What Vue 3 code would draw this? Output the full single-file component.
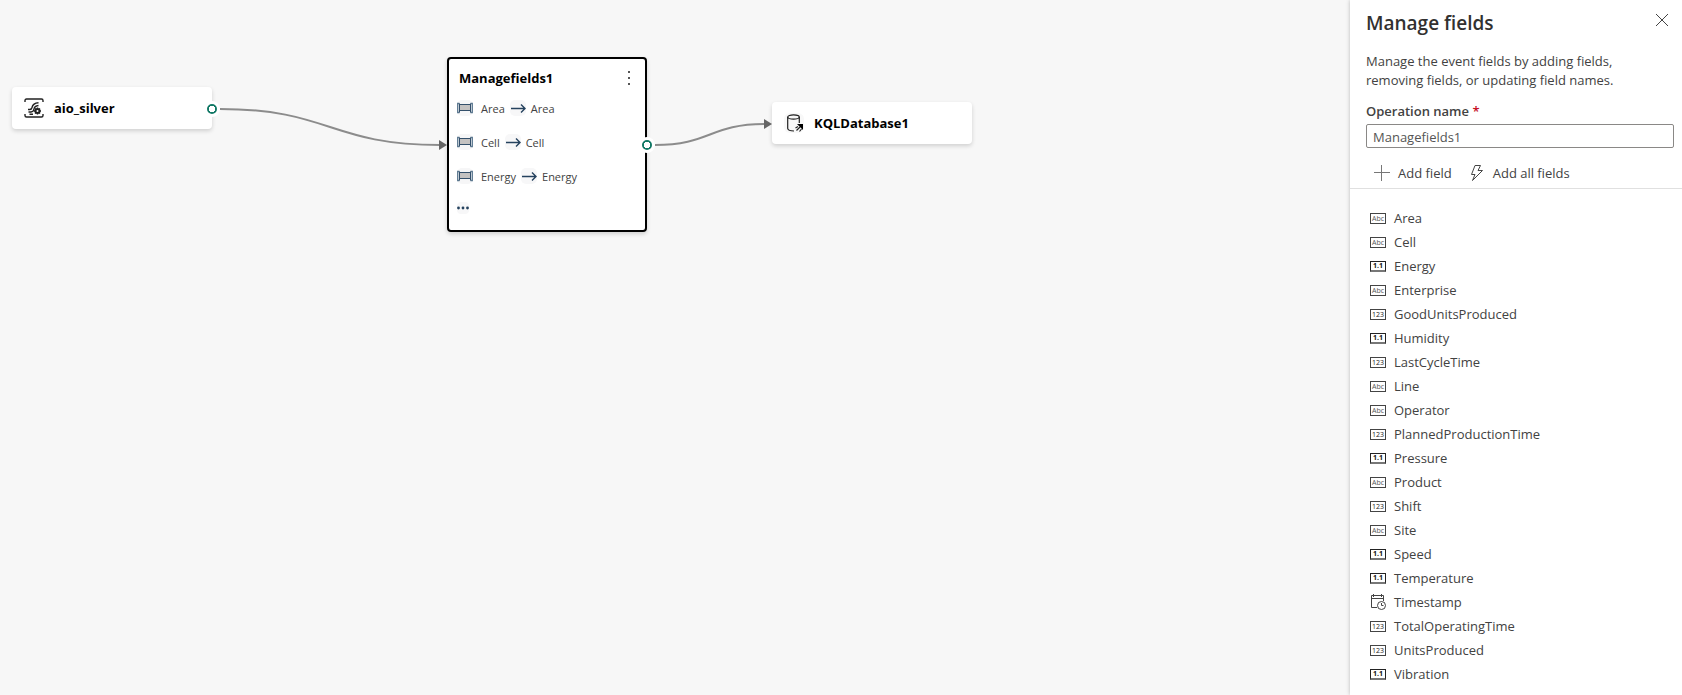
<script setup>
import { ref } from 'vue'

const operationName = ref('Managefields1')
const mappings = ['Area', 'Cell', 'Energy']
const fields = [
  ['Area', 'Abc'],
  ['Cell', 'Abc'],
  ['Energy', '1.1'],
  ['Enterprise', 'Abc'],
  ['GoodUnitsProduced', '123'],
  ['Humidity', '1.1'],
  ['LastCycleTime', '123'],
  ['Line', 'Abc'],
  ['Operator', 'Abc'],
  ['PlannedProductionTime', '123'],
  ['Pressure', '1.1'],
  ['Product', 'Abc'],
  ['Shift', '123'],
  ['Site', 'Abc'],
  ['Speed', '1.1'],
  ['Temperature', '1.1'],
  ['Timestamp', 'date'],
  ['TotalOperatingTime', '123'],
  ['UnitsProduced', '123'],
  ['Vibration', '1.1'],
].map(([name, type]) => ({ name, type }))
</script>

<template>
  <div class="editor">
    <main class="canvas">
      <svg class="edges" width="1000" height="260" aria-hidden="true">
        <path d="M220 109 C330 109 330 145 440 145" />
        <path d="M655 145 C710 145 710 124 765 124" />
        <path class="tip" d="M439 140 L447 145 L439 150 Z" />
        <path class="tip" d="M764 119 L772 124 L764 129 Z" />
      </svg>

      <section class="node source">
        <svg class="node-icon" width="20" height="20" viewBox="0 0 20 20" fill="none" stroke="#222" stroke-width="1.4">
          <path d="M1 4V2.5Q1 1 2.5 1H17.500Q19 1 19 2.500V4M1 16V17.500Q1 19 2.500 19H17.500Q19 19 19 17.500V16" />
          <path d="M4 11.500H6Q7.500 11.500 8 9.500Q9 5 14.500 4.800M4.500 14H7Q9.500 14 10 11Q10.500 8 14.500 7.500M5.500 16.300H9" />
          <circle cx="13.500" cy="13" r="2" stroke-width="2" />
          <path d="M13.500 9.500V11M13.500 15V16.500M10 13H11.500M15.500 13H17M11 10.500L12 11.500M15 14.500L16 15.500M11 15.500L12 14.500M15 11.500L16 10.500" />
        </svg>
        <h2>aio_silver</h2>
        <span class="port"></span>
      </section>

      <section class="node operator">
        <header>
          <h2>Managefields1</h2>
          <button type="button" class="more" aria-label="More options">
            <svg width="4" height="16" viewBox="0 0 4 16" fill="#555">
              <path d="M1 1h2v2H1zM1 7h2v2H1zM1 13h2v2H1z" />
            </svg>
          </button>
        </header>
        <ul class="mappings">
          <li v-for="field in mappings" :key="field">
            <svg class="column-icon" width="16" height="16" viewBox="0 0 16 16" fill="none" stroke="#34506b">
              <rect width="16" height="16" rx="5" fill="#f6f6f7" stroke="none" />
              <path d="M2.500 3.500H.7V12.500H2.500M13.500 3.500H15.300V12.500H13.500" stroke="#5b7890" stroke-width="1.300" />
              <rect x="2.500" y="4.500" width="11" height="6" fill="#c4c2c1" />
              <path d="M2.500 3.500V12.500M13.500 3.500V12.500" />
            </svg>
            <span>{{ field }}</span>
            <svg class="arrow" width="16" height="16" viewBox="0 0 16 16" fill="none" stroke="#25425e" stroke-width="1.400">
              <rect width="16" height="16" rx="5" fill="#f7f7f8" stroke="none" />
              <path d="M1 8.500H15M11 4.500L15 8.500L11 12.500" />
            </svg>
            <span>{{ field }}</span>
          </li>
        </ul>
        <svg class="ellipsis" width="12" height="12" viewBox="0 0 12 12" fill="#25425e">
          <rect width="12" height="12" rx="4" fill="#f7f7f8" />
          <circle cx="1.500" cy="6" r="1.400" /><circle cx="6" cy="6" r="1.400" /><circle cx="10.500" cy="6" r="1.400" />
        </svg>
        <span class="port"></span>
      </section>

      <section class="node destination">
        <svg class="node-icon" width="20" height="20" viewBox="0 0 20 20" fill="none" stroke="#222" stroke-width="1.200">
          <rect width="20" height="20" rx="6" fill="#f8f8f8" stroke="none" />
          <ellipse cx="9.500" cy="4" rx="5.800" ry="2.200" />
          <path d="M3.700 4V15.500Q4 18 10 18M15.300 4V10" />
          <path d="M13 11H19V17Z" fill="#000" stroke="none" />
          <path d="M11.500 15L14 13.500M12.500 17.500L16 14M15.500 18.500L17.500 16" />
        </svg>
        <h2>KQLDatabase1</h2>
      </section>
    </main>

    <aside class="panel">
      <header class="panel-head">
        <h1>Manage fields</h1>
        <button type="button" class="close" aria-label="Close">
          <svg width="14" height="14" viewBox="0 0 14 14" fill="none" stroke="#444" stroke-width="1">
            <path d="M1 1L13 13M13 1L1 13" />
          </svg>
        </button>
      </header>
      <p class="description">Manage the event fields by adding fields, removing fields, or updating field names.</p>
      <label for="operation-name">Operation name <span class="required">*</span></label>
      <input id="operation-name" v-model="operationName" type="text" required />
      <div class="toolbar">
        <button type="button">
          <svg width="16" height="16" viewBox="0 0 16 16" fill="none" stroke="#777">
            <path d="M0 7.500H16M7.500 0V16" />
          </svg>
          Add field
        </button>
        <button type="button">
          <svg width="16" height="16" viewBox="0 0 16 16" fill="none" stroke="#444" stroke-linejoin="round">
            <path d="M6 .5H11.500L9 5.500H13.500L3.500 15.500L6 9.500H2.500Z" />
          </svg>
          Add all fields
        </button>
      </div>
      <ul class="fields">
        <li v-for="field in fields" :key="field.name">
          <svg v-if="field.type === 'date'" width="16" height="16" viewBox="0 0 16 16" fill="none" stroke="#444">
            <path d="M7 13.500H1.500V1.500H13.500V7M1.500 4.500H13.500M3.500 0V3M11.500 0V3" />
            <circle cx="11.500" cy="11.500" r="4" />
            <path d="M11.500 9V11.500H13.500" />
          </svg>
          <span v-else class="type" :class="{ decimal: field.type === '1.1', whole: field.type === '123' }">{{ field.type }}</span>
          <span>{{ field.name }}</span>
        </li>
      </ul>
    </aside>
  </div>
</template>

<style>
body {
  margin: 0;
}
</style>

<style scoped>
.editor {
  display: flex;
  min-height: 100vh;
  background: #f7f7f7;
  color: #424242;
  font-family: "Open Sans", "Noto Sans", sans-serif;
  font-size: 13px;
}
h1, h2, p, ul {
  margin: 0;
  padding: 0;
}
ul {
  list-style: none;
}
svg {
  display: block;
  flex: none;
}
button {
  padding: 0;
  border: 0;
  background: none;
  color: inherit;
  font: inherit;
}
.canvas {
  position: relative;
  flex: 1;
  min-width: 0;
  overflow: hidden;
}
.edges {
  position: absolute;
  top: 0;
  left: 0;
  fill: none;
  stroke: #8c8c8c;
  stroke-width: 2;
}
.edges .tip {
  fill: #666;
  stroke: none;
}
.node {
  position: absolute;
  box-sizing: border-box;
  width: 200px;
  border-radius: 4px;
  background: #fff;
  box-shadow: 0 2px 4px rgba(0, 0, 0, 0.16);
}
.node h2 {
  color: #000;
  font-size: 13px;
  font-weight: 700;
  line-height: 20px;
}
.source, .destination {
  display: flex;
  align-items: center;
  gap: 10px;
  height: 42px;
  padding: 0 12px;
}
.source {
  top: 87px;
  left: 12px;
}
.destination {
  top: 102px;
  left: 772px;
}
.operator {
  top: 57px;
  left: 447px;
  padding: 9px 8px 16px;
  border: 2px solid #000;
}
.operator header {
  display: flex;
  align-items: center;
  justify-content: space-between;
  padding: 0 0 0 2px;
}
.more {
  display: flex;
  justify-content: center;
  width: 16px;
}
.port {
  position: absolute;
  top: 50%;
  right: -8px;
  box-sizing: border-box;
  width: 16px;
  height: 16px;
  margin-top: -8px;
  border: 3px solid #fff;
  border-radius: 50%;
  background: radial-gradient(circle, #fff 3px, #117865 3px);
}
.source .port {
  margin-top: -7px;
}
.operator .port {
  right: -10px;
}
.mappings {
  padding-top: 3px;
}
.mappings li {
  display: flex;
  align-items: center;
  height: 34px;
  font-size: 11px;
}
.column-icon {
  margin-right: 8px;
}
.arrow {
  margin: 0 5px;
}
.node .ellipsis {
  margin-top: 9px;
}
.panel {
  box-sizing: border-box;
  width: 332px;
  background: #fff;
  box-shadow: 0 0 4px rgba(0, 0, 0, 0.25);
  z-index: 1;
}
.panel-head {
  display: flex;
  align-items: flex-start;
  justify-content: space-between;
  padding: 9px 13px 0 16px;
}
h1 {
  color: #323130;
  font-size: 19px;
  font-weight: 600;
  line-height: 28px;
}
.close {
  padding-top: 4px;
}
.description {
  padding: 15px 16px 0;
  line-height: 19px;
}
label {
  display: block;
  padding: 12px 16px 3px;
  font-weight: 600;
  line-height: 19px;
}
.required {
  color: #c50f1f;
}
input {
  display: block;
  box-sizing: border-box;
  width: calc(100% - 24px);
  height: 24px;
  margin: 0 8px 0 16px;
  padding: 1px 6px 0;
  border: 1px solid #8a8886;
  border-radius: 2px;
  background: #fff;
  color: #555;
  font: inherit;
}
.toolbar {
  display: flex;
  align-items: center;
  gap: 17px;
  height: 41px;
  padding: 9px 24px 0;
  box-sizing: border-box;
  border-bottom: 1px solid #e0e0e0;
}
.toolbar button {
  display: flex;
  align-items: center;
  gap: 8px;
  line-height: 20px;
}
.fields {
  padding: 17px 20px 8px;
}
.fields li {
  display: flex;
  align-items: center;
  gap: 8px;
  height: 24px;
}
.type {
  display: flex;
  align-items: center;
  justify-content: center;
  box-sizing: border-box;
  width: 16px;
  height: 11px;
  border: 1px solid #444;
  color: #555;
  font-size: 7px;
  line-height: 9px;
}
.decimal {
  border-color: #222;
  border-bottom: 2px solid #777;
  color: #111;
  font-weight: 700;
}
.whole {
  color: #222;
}
</style>
